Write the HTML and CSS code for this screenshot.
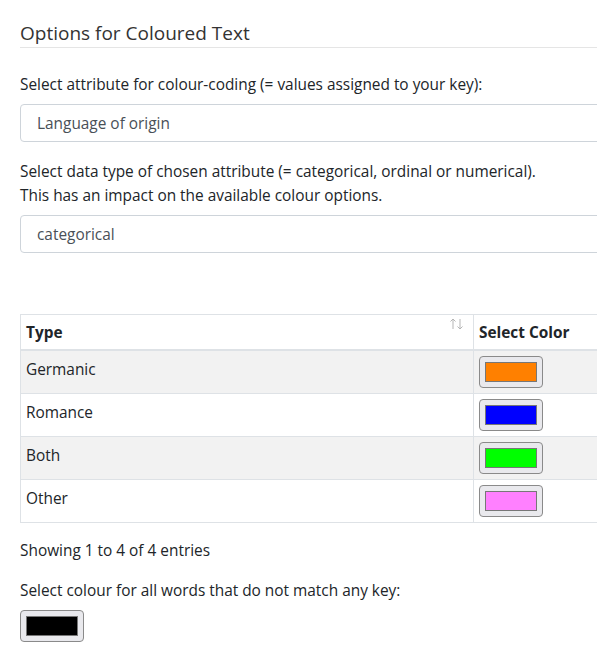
FILE: index.html
```html
<!DOCTYPE html>
<html>
<head>
<meta charset="utf-8">
<link rel="stylesheet" href="styles.css">
</head>
<body>
<div class="page">
  <h3 class="title">Options for Coloured Text</h3>
  <div class="group first">
    <label class="lbl">Select attribute for colour-coding (= values assigned to your key):</label>
    <div class="select">Language of origin</div>
  </div>
  <div class="group">
    <label class="lbl">Select data type of chosen attribute (= categorical, ordinal or numerical).<br>This has an impact on the available colour options.</label>
    <div class="select">categorical</div>
  </div>
  <table class="tbl">
    <thead>
      <tr><th class="c1">Type<svg class="sort" width="16" height="12" viewBox="0 0 16 12"><path d="M4 11V1M1.5 3.5L4 1l2.5 2.5" fill="none" stroke="#b5b5b5" stroke-width="1"/><path d="M11 1v10M8.5 8.5L11 11l2.5-2.5" fill="none" stroke="#b5b5b5" stroke-width="1"/></svg></th><th class="c2">Select Color</th></tr>
    </thead>
    <tbody>
      <tr class="odd"><td>Germanic</td><td class="cc"><span class="swatch"><span class="fill orange"></span></span></td></tr>
      <tr><td>Romance</td><td class="cc"><span class="swatch"><span class="fill blue"></span></span></td></tr>
      <tr class="odd"><td>Both</td><td class="cc"><span class="swatch"><span class="fill green"></span></span></td></tr>
      <tr><td>Other</td><td class="cc"><span class="swatch"><span class="fill pink"></span></span></td></tr>
    </tbody>
  </table>
  <p class="info">Showing 1 to 4 of 4 entries</p>
  <p class="lbl2">Select colour for all words that do not match any key:</p>
  <span class="swatch"><span class="fill black"></span></span>
</div>
</body>
</html>
```
FILE: styles.css
```css
html, body {
  margin: 0;
  padding: 0;
  background: #fff;
  overflow: hidden;
}
body {
  font-family: "Open Sans", "Noto Sans", sans-serif;
  font-size: 15.4px;
  color: #212529;
}
.page {
  width: 640px;
  padding: 0 0 0 20px;
}
.title {
  margin: 0;
  padding-top: 20px;
  font-size: 19px;
  font-weight: 400;
  color: #333;
  line-height: 26px;
  padding-bottom: 1px;
  border-bottom: 1px solid #e5e5e5;
}
.group {
  margin-top: 18px;
}
.group.first {
  margin-top: 25px;
}
.lbl {
  display: block;
  line-height: 24px;
  margin-bottom: 7px;
}
.select {
  height: 36px;
  line-height: 38px;
  border: 1px solid #ced4da;
  border-radius: 4px;
  padding-left: 16px;
  color: #495057;
}
.tbl {
  margin-top: 61px;
  width: 640px;
  border-collapse: collapse;
  border-top: 1px solid #dee2e6;
  border-left: 1px solid #dee2e6;
}
.tbl th {
  text-align: left;
  font-weight: 700;
  padding: 2px 5px 0;
  line-height: 32px;
  border-bottom: 2px solid #dee2e6;
  vertical-align: top;
}
.tbl th.c1 {
  width: 442px;
  position: relative;
}
.sort {
  position: absolute;
  right: 8px;
  top: 3px;
}
.tbl td, .tbl th {
  border-right: 1px solid #dee2e6;
}
.tbl td {
  padding: 0 5px;
  border-bottom: 1px solid #dee2e6;
  vertical-align: top;
  line-height: 37px;
  height: 42px;
  box-sizing: border-box;
}
.tbl tr.odd td {
  background: #f2f2f2;
}
.tbl td.cc {
  padding: 5px 5px 5px;
  line-height: 0;
}
.swatch {
  display: block;
  box-sizing: border-box;
  width: 64px;
  height: 32px;
  border: 1px solid #8a8a8a;
  border-radius: 4px;
  background: #e9e9ed;
  padding: 5px 5px;
}
.fill {
  display: block;
  width: 100%;
  height: 100%;
  border: 1px solid #777;
  box-sizing: border-box;
}
.orange { background: #ff8000; }
.blue { background: #0000ff; }
.green { background: #00ff00; }
.pink { background: #ff80ff; }
.black { background: #000; }
.info {
  margin: 17px 0 0;
  line-height: 22px;
}
.lbl2 {
  margin: 18px 0 8px;
  line-height: 22px;
}
```
